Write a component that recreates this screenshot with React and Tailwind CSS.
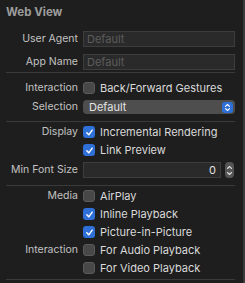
import React from 'react';

const font = { fontFamily: '"Inter", "Liberation Sans", sans-serif' };

function Check({ checked }) {
  if (checked) {
    return (
      <span className="flex h-[12px] w-[12px] shrink-0 items-center justify-center rounded-[3px] bg-[#2f6fd8]">
        <svg width="9" height="9" viewBox="0 0 10 10" fill="none">
          <path d="M2 5.3 L4.2 7.6 L8 2.4" stroke="#ffffff" strokeWidth="1.6" strokeLinecap="round" strokeLinejoin="round" />
        </svg>
      </span>
    );
  }
  return <span className="h-[12px] w-[12px] shrink-0 rounded-[3px] border border-[#5a5a5a] bg-[#484848]" />;
}

function Row({ label, children, className = '' }) {
  return (
    <div className={`flex items-center ${className}`}>
      <div className="w-[83px] shrink-0 pr-[5px] text-right text-[10.5px] text-[#c2c2c2]">{label}</div>
      <div className="flex min-w-0 flex-1 items-center">{children}</div>
    </div>
  );
}

function CheckRow({ label, text, checked }) {
  return (
    <Row label={label} className="h-[18px]">
      <Check checked={checked} />
      <span className="ml-[5px] text-[#dadada]">{text}</span>
    </Row>
  );
}

function Field({ placeholder }) {
  return (
    <div className="flex h-[16px] flex-1 items-center border border-[#3d3d3d] bg-[#2a2a2a] px-[3px] text-[#5c5c5c]">
      {placeholder}
    </div>
  );
}

function Sep() {
  return <div className="ml-[6px] mr-[8px] h-px bg-[#3a3a3a]" />;
}

export default function App() {
  return (
    <div className="flex h-[283px] w-[245px] overflow-hidden bg-[#1e1e1e] text-[11px] leading-none" style={font}>
      <div className="flex-1">
        <div className="px-[6px] pt-[6px] text-[11.5px] font-bold leading-[12px] text-[#9d9d9d]">Web View</div>
        <div className="pr-[8px]">
          <Row label="User Agent" className="mt-[13px] h-[16px]">
            <Field placeholder="Default" />
          </Row>
          <Row label="App Name" className="mt-[7px] h-[16px]">
            <Field placeholder="Default" />
          </Row>
        </div>
        <div className="mt-[2px]">
          <Sep />
        </div>
        <div className="mt-[6px] pr-[8px]">
          <CheckRow label="Interaction" text="Back/Forward Gestures" checked={false} />
          <Row label="Selection" className="mt-[3px] h-[14px]">
            <div className="flex h-[14px] flex-1 items-center justify-between rounded-[4px] bg-[#4e4e4e] pl-[6px] pr-[2px] text-[#e4e4e4]">
              <span>Default</span>
              <span className="flex h-[11px] w-[11px] items-center justify-center rounded-[3px] bg-[#2f6fd8]">
                <svg width="7" height="9" viewBox="0 0 7 9" fill="none">
                  <path d="M1.5 3.3 L3.5 1.5 L5.5 3.3 M1.5 5.7 L3.5 7.5 L5.5 5.7" stroke="#ffffff" strokeWidth="1.1" strokeLinecap="round" strokeLinejoin="round" />
                </svg>
              </span>
            </div>
          </Row>
        </div>
        <div className="mt-[7px]">
          <Sep />
        </div>
        <div className="mt-[1px] pr-[8px]">
          <CheckRow label="Display" text="Incremental Rendering" checked />
          <CheckRow label="" text="Link Preview" checked />
          <Row label="Min Font Size" className="mt-[3px] h-[16px]">
            <div className="flex h-[16px] flex-1 items-center justify-end border border-[#3d3d3d] bg-[#2a2a2a] px-[4px] text-[#e0e0e0]">
              0
            </div>
            <span className="ml-[4px] mr-[1px] flex h-[16px] w-[9px] items-center justify-center rounded-[4px] bg-[#555555]">
              <svg width="7" height="13" viewBox="0 0 7 13" fill="none">
                <path d="M1.5 4.5 L3.5 2.5 L5.5 4.5 M1.5 8.5 L3.5 10.5 L5.5 8.5" stroke="#dcdcdc" strokeWidth="1.1" strokeLinecap="round" strokeLinejoin="round" />
              </svg>
            </span>
          </Row>
        </div>
        <div className="mt-[7px]">
          <Sep />
        </div>
        <div className="mt-[1px] pr-[8px]">
          <CheckRow label="Media" text="AirPlay" checked={false} />
          <CheckRow label="" text="Inline Playback" checked />
          <CheckRow label="" text="Picture-in-Picture" checked />
          <CheckRow label="Interaction" text="For Audio Playback" checked={false} />
          <CheckRow label="" text="For Video Playback" checked={false} />
        </div>
        <div className="mt-[2px]">
          <Sep />
        </div>
      </div>
      <div className="w-[2px] bg-[#3a3a3a]" />
    </div>
  );
}
